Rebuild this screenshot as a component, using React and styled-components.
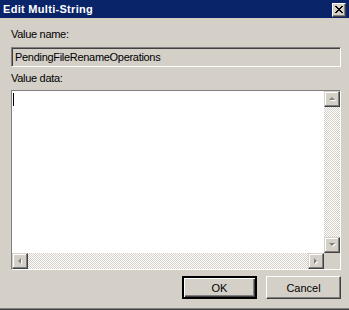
import React from 'react';
import styled, { createGlobalStyle, css } from 'styled-components';

const FACE = '#D4D0C8';
const SHADOW = '#808080';
const DARK = '#404040';

const GlobalStyle = createGlobalStyle`
  html, body {
    margin: 0;
    padding: 0;
    background: ${FACE};
  }
`;

const raised = css`
  box-sizing: border-box;
  background: ${FACE};
  border: 1px solid;
  border-color: #fff ${DARK} ${DARK} #fff;
  box-shadow: inset -1px -1px ${SHADOW}, inset 1px 1px ${FACE};
`;

const sunken = css`
  box-sizing: border-box;
  border: 1px solid;
  border-color: ${SHADOW} #fff #fff ${SHADOW};
  box-shadow: inset 1px 1px ${DARK}, inset -1px -1px ${FACE};
`;

const Dialog = styled.div`
  width: 349px;
  height: 310px;
  box-sizing: border-box;
  display: flex;
  flex-direction: column;
  background: ${FACE};
  border-bottom: 1px solid ${DARK};
  box-shadow: inset 0 -1px ${SHADOW};
  font-family: 'Liberation Sans', Arial, sans-serif;
  font-size: 11px;
  color: #000;
`;

const TitleBar = styled.div`
  height: 18px;
  flex: none;
  display: flex;
  align-items: center;
  justify-content: space-between;
  padding: 0 3px 0 3px;
  background: #0a246a;
  color: #fff;
  font-weight: bold;
  letter-spacing: 0.3px;
`;

const CloseButton = styled.div`
  ${raised};
  width: 14px;
  height: 14px;
  display: flex;
  align-items: center;
  justify-content: center;
  margin-top: 1px;
`;

const Body = styled.div`
  flex: 1;
  display: flex;
  flex-direction: column;
  padding: 10px 8px 0 11px;
`;

const Label = styled.div`
  line-height: 13px;
  height: 13px;
  letter-spacing: -0.3px;
`;

const Field = styled.div`
  ${sunken};
  height: 20px;
  margin-top: 6px;
  padding: 0 3px;
  display: flex;
  align-items: center;
  background: ${FACE};
  letter-spacing: -0.3px;
`;

const DataBox = styled.div`
  ${sunken};
  height: 180px;
  margin-top: 5px;
  display: grid;
  grid-template-columns: 1fr 16px;
  grid-template-rows: 1fr 16px;
`;

const TextSpace = styled.div`
  background: #fff;
  padding: 2px 0 0 1px;
`;

const Caret = styled.div`
  width: 1px;
  height: 13px;
  background: #000;
`;

const ScrollBar = styled.div`
  display: flex;
  flex-direction: ${(p) => (p.$vertical ? 'column' : 'row')};
`;

const Track = styled.div`
  flex: 1;
  background-color: #fff;
  background-image: conic-gradient(${FACE} 25%, #fff 0 50%, ${FACE} 0 75%, #fff 0);
  background-size: 2px 2px;
`;

const ArrowButton = styled.div`
  ${raised};
  border-color: ${FACE} ${DARK} ${DARK} ${FACE};
  box-shadow: inset -1px -1px ${SHADOW}, inset 1px 1px #fff;
  width: 16px;
  height: 16px;
  flex: none;
  display: flex;
  align-items: center;
  justify-content: center;
`;

const Corner = styled.div`
  background: ${FACE};
`;

const ButtonRow = styled.div`
  display: flex;
  justify-content: flex-end;
  gap: 9px;
  margin-top: 6px;
`;

const Button = styled.div`
  ${raised};
  width: 75px;
  height: 23px;
  display: flex;
  align-items: center;
  justify-content: center;
  ${(p) =>
    p.$default &&
    css`
      border: 2px solid;
      border-color: #000;
      box-shadow: inset 1px 1px #fff, inset -1px -1px ${DARK}, inset -2px -2px ${SHADOW};
    `}
`;

const arrows = {
  up: '4,1 7,4 1,4',
  down: '1,1 7,1 4,4',
  left: '4,1 4,7 1,4',
  right: '1,1 1,7 4,4',
};

const Arrow = ({ dir }) => {
  const horiz = dir === 'left' || dir === 'right';
  const w = horiz ? 6 : 9;
  const h = horiz ? 9 : 6;
  return (
    <svg width={w} height={h} viewBox={`0 0 ${w} ${h}`}>
      <polygon points={arrows[dir]} fill="#fff" transform="translate(1,1)" />
      <polygon points={arrows[dir]} fill={SHADOW} />
    </svg>
  );
};

const CloseIcon = () => (
  <svg width="8" height="7" viewBox="0 0 8 7">
    <path d="M0 0h2v1h-2zM1 1h2v1h-2zM2 2h4v1h-4zM3 3h2v1h-2zM2 4h4v1h-4zM1 5h2v1h-2zM0 6h2v1h-2zM6 0h2v1h-2zM5 1h2v1h-2zM5 5h2v1h-2zM6 6h2v1h-2z" fill="#000" />
  </svg>
);

export default function App() {
  return (
    <>
      <GlobalStyle />
      <Dialog>
        <TitleBar>
          <span>Edit Multi-String</span>
          <CloseButton>
            <CloseIcon />
          </CloseButton>
        </TitleBar>
        <Body>
          <Label>Value name:</Label>
          <Field>PendingFileRenameOperations</Field>
          <Label style={{ marginTop: 5 }}>Value data:</Label>
          <DataBox>
            <TextSpace>
              <Caret />
            </TextSpace>
            <ScrollBar $vertical>
              <ArrowButton>
                <Arrow dir="up" />
              </ArrowButton>
              <Track />
              <ArrowButton>
                <Arrow dir="down" />
              </ArrowButton>
            </ScrollBar>
            <ScrollBar>
              <ArrowButton>
                <Arrow dir="left" />
              </ArrowButton>
              <Track />
              <ArrowButton>
                <Arrow dir="right" />
              </ArrowButton>
            </ScrollBar>
            <Corner />
          </DataBox>
          <ButtonRow>
            <Button $default>OK</Button>
            <Button>Cancel</Button>
          </ButtonRow>
        </Body>
      </Dialog>
    </>
  );
}
